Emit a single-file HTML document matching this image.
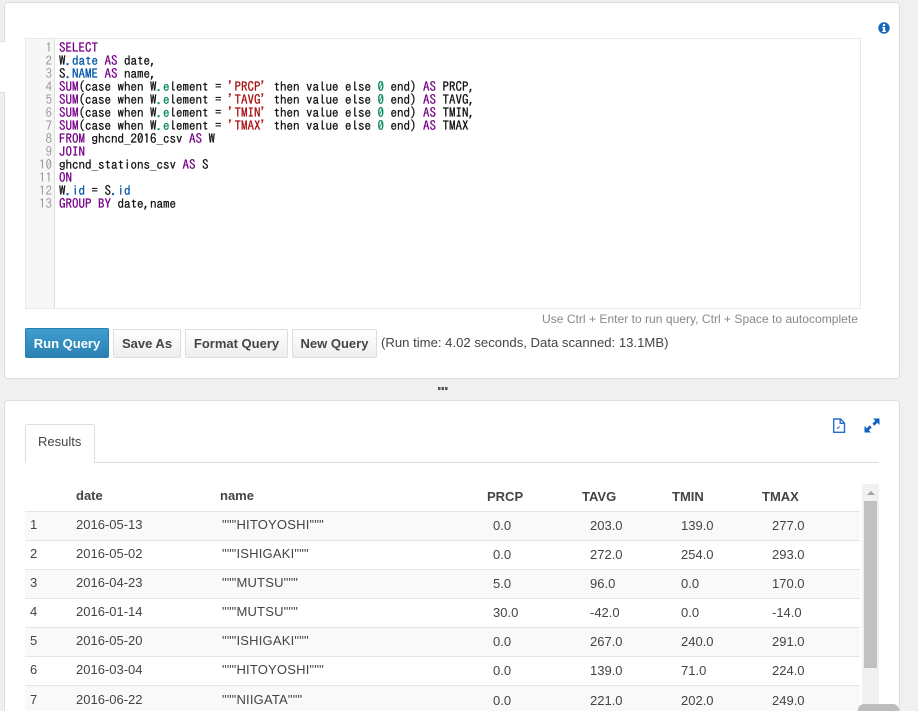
<!DOCTYPE html>
<html>
<head>
<meta charset="utf-8">
<style>
html,body{margin:0;padding:0;width:918px;height:711px;overflow:hidden;background:#f0f0f0;font-family:"Liberation Sans",sans-serif;color:#333;}
#wrap{position:relative;width:918px;height:711px;overflow:hidden;}
.abs,.t{position:absolute;}
.t{white-space:pre;font-size:13px;line-height:16px;color:#444;}
.n{letter-spacing:.2px;}
.panel{position:absolute;background:#fff;border:1px solid #ddd;border-radius:4px;box-sizing:border-box;}
#code{position:absolute;left:59px;top:41px;font-family:"IPAGothic",monospace;font-size:13px;line-height:13px;color:#111;white-space:pre;-webkit-text-stroke:.25px;}
#nums{position:absolute;left:26px;top:41px;width:26px;text-align:right;font-family:"IPAGothic",monospace;font-size:13px;line-height:13px;color:#999;white-space:pre;}
.k{color:#708}.v{color:#05a}.e{color:#085}.s{color:#a11}
.btn{position:absolute;top:329px;height:29px;box-sizing:border-box;border:1px solid #ddd;border-radius:2px;background:linear-gradient(#fff,#eee);font-size:13px;font-weight:bold;line-height:27px;text-align:center;color:#444;}
.row{position:absolute;left:25px;width:835px;height:29px;box-sizing:border-box;border-top:1px solid #e4e4e4;}
.odd{background:#f9f9f9;}
.h{font-weight:bold;color:#444;}
</style>
</head>
<body>
<div id="wrap">
<div class="abs" style="left:0;top:41px;width:6px;height:52px;background:#fff;border-top:1px solid #ddd;border-bottom:1px solid #ddd;box-sizing:border-box;"></div>
<div class="panel" style="left:4px;top:2px;width:896px;height:377px;"></div>
<div class="abs" style="left:4px;top:42px;width:2px;height:50px;background:#fff;"></div>
<div class="abs" style="left:25px;top:38px;width:836px;height:271px;box-sizing:border-box;border:1px solid #eaeaea;background:#fff;"></div>
<div class="abs" style="left:26px;top:39px;width:29px;height:269px;background:#f7f7f7;border-right:1px solid #ddd;box-sizing:border-box;"></div>
<div id="nums">1
2
3
4
5
6
7
8
9
10
11
12
13</div>
<div id="code"><span class="k">SELECT</span>
W<span class="v">.date</span> <span class="k">AS</span> date,
S<span class="v">.NAME</span> <span class="k">AS</span> name,
<span class="k">SUM</span>(case when W<span class="e">.e</span>lement = <span class="s">'PRCP'</span> then value else <span class="e">0</span> end) <span class="k">AS</span> PRCP,
<span class="k">SUM</span>(case when W<span class="e">.e</span>lement = <span class="s">'TAVG'</span> then value else <span class="e">0</span> end) <span class="k">AS</span> TAVG,
<span class="k">SUM</span>(case when W<span class="e">.e</span>lement = <span class="s">'TMIN'</span> then value else <span class="e">0</span> end) <span class="k">AS</span> TMIN,
<span class="k">SUM</span>(case when W<span class="e">.e</span>lement = <span class="s">'TMAX'</span> then value else <span class="e">0</span> end) <span class="k">AS</span> TMAX
<span class="k">FROM</span> ghcnd_2016_csv <span class="k">AS</span> W
<span class="k">JOIN</span>
ghcnd_stations_csv <span class="k">AS</span> S
<span class="k">ON</span>
W<span class="v">.id</span> = S<span class="v">.id</span>
<span class="k">GROUP BY</span> date,name</div>

<svg class="abs" style="left:878px;top:22px" width="12" height="12" viewBox="0 0 12 12"><circle cx="6" cy="6" r="5.7" fill="#1668b8"/><rect x="4.9" y="2" width="2.2" height="2" fill="#fff"/><path d="M4.200 5h2.900v3.800h.8V10H4.200V8.800h.8V6.200h-.8z" fill="#fff"/></svg>

<div class="t" style="left:542px;top:311px;font-size:12.08px;color:#888;">Use Ctrl + Enter to run query, Ctrl + Space to autocomplete</div>
<div class="btn" style="left:25px;top:328px;width:84px;height:30px;line-height:29px;background:linear-gradient(#3f9fcf,#2b80b4);border-color:#2b7fb0;color:#fff;">Run Query</div>
<div class="btn" style="left:113px;width:68px;">Save As</div>
<div class="btn" style="left:185px;width:103px;">Format Query</div>
<div class="btn" style="left:292px;width:85px;">New Query</div>
<div class="t" style="left:381px;top:335px;font-size:13.13px;">(Run time: 4.02 seconds, Data scanned: 13.1MB)</div>
<div class="abs" style="left:438px;top:387px;width:10px;height:3px;background:repeating-linear-gradient(90deg,#555 0 2.500px,transparent 2.500px 3.500px);"></div>

<div class="panel" style="left:4px;top:400px;width:896px;height:340px;"></div>
<svg class="abs" style="left:832px;top:418px" width="14" height="16" viewBox="0 0 14 16" fill="none" stroke="#2a6fcf" stroke-width="1.400"><path d="M1.700 1h6.800l4 4.200v9.100H1.700z"/><path d="M8.200 1.500v3.800h4"/><path d="M5.200 10.800l2.400-2.400" stroke="#4a6fa8" stroke-width="1.200"/></svg>
<svg class="abs" style="left:864px;top:417px" width="16" height="17" viewBox="0 0 16 17" fill="#0f62c4"><path d="M9 1.500h6.500V8l-2.200-2.200-2.900 2.900-2-2L11.300 3.700zM.5 9v6.500H7l-2.200-2.200 2.900-2.900-2-2-2.900 2.900z"/></svg>

<div class="abs" style="left:25px;top:462px;width:854px;height:1px;background:#ddd;"></div>
<div class="abs" style="left:25px;top:424px;width:70px;height:39px;box-sizing:border-box;background:#fff;border:1px solid #ddd;border-bottom:none;border-radius:3px 3px 0 0;"></div>
<div class="t" style="left:38px;top:434px;">Results</div>

<div class="t h" style="left:76px;top:488px;">date</div>
<div class="t h" style="left:220px;top:488px;">name</div>
<div class="t h" style="left:487px;top:489px;">PRCP</div>
<div class="t h" style="left:582px;top:489px;">TAVG</div>
<div class="t h" style="left:672px;top:489px;">TMIN</div>
<div class="t h" style="left:762px;top:489px;">TMAX</div>

<div class="row odd" style="top:511px;"></div>
<div class="row" style="top:540px;"></div>
<div class="row odd" style="top:569px;"></div>
<div class="row" style="top:598px;"></div>
<div class="row odd" style="top:627px;"></div>
<div class="row" style="top:656px;"></div>
<div class="row odd" style="top:685px;height:30px;"></div>

<div class="t" style="left:30px;top:517px;">1</div><div class="t" style="left:76px;top:517px;">2016-05-13</div><div class="t n" style="left:222px;top:517px;">"""HITOYOSHI"""</div><div class="t" style="left:493px;top:518px;">0.0</div><div class="t" style="left:590px;top:518px;">203.0</div><div class="t" style="left:681px;top:518px;">139.0</div><div class="t" style="left:772px;top:518px;">277.0</div>
<div class="t" style="left:30px;top:546px;">2</div><div class="t" style="left:76px;top:546px;">2016-05-02</div><div class="t n" style="left:222px;top:546px;">"""ISHIGAKI"""</div><div class="t" style="left:493px;top:547px;">0.0</div><div class="t" style="left:590px;top:547px;">272.0</div><div class="t" style="left:681px;top:547px;">254.0</div><div class="t" style="left:772px;top:547px;">293.0</div>
<div class="t" style="left:30px;top:575px;">3</div><div class="t" style="left:76px;top:575px;">2016-04-23</div><div class="t n" style="left:222px;top:575px;">"""MUTSU"""</div><div class="t" style="left:493px;top:576px;">5.0</div><div class="t" style="left:590px;top:576px;">96.0</div><div class="t" style="left:681px;top:576px;">0.0</div><div class="t" style="left:772px;top:576px;">170.0</div>
<div class="t" style="left:30px;top:604px;">4</div><div class="t" style="left:76px;top:604px;">2016-01-14</div><div class="t n" style="left:222px;top:604px;">"""MUTSU"""</div><div class="t" style="left:493px;top:605px;">30.0</div><div class="t" style="left:590px;top:605px;">-42.0</div><div class="t" style="left:681px;top:605px;">0.0</div><div class="t" style="left:772px;top:605px;">-14.0</div>
<div class="t" style="left:30px;top:633px;">5</div><div class="t" style="left:76px;top:633px;">2016-05-20</div><div class="t n" style="left:222px;top:633px;">"""ISHIGAKI"""</div><div class="t" style="left:493px;top:634px;">0.0</div><div class="t" style="left:590px;top:634px;">267.0</div><div class="t" style="left:681px;top:634px;">240.0</div><div class="t" style="left:772px;top:634px;">291.0</div>
<div class="t" style="left:30px;top:662px;">6</div><div class="t" style="left:76px;top:662px;">2016-03-04</div><div class="t n" style="left:222px;top:662px;">"""HITOYOSHI"""</div><div class="t" style="left:493px;top:663px;">0.0</div><div class="t" style="left:590px;top:663px;">139.0</div><div class="t" style="left:681px;top:663px;">71.0</div><div class="t" style="left:772px;top:663px;">224.0</div>
<div class="t" style="left:30px;top:692px;">7</div><div class="t" style="left:76px;top:692px;">2016-06-22</div><div class="t n" style="left:222px;top:692px;">"""NIIGATA"""</div><div class="t" style="left:493px;top:693px;">0.0</div><div class="t" style="left:590px;top:693px;">221.0</div><div class="t" style="left:681px;top:693px;">202.0</div><div class="t" style="left:772px;top:693px;">249.0</div>

<div class="abs" style="left:862px;top:484px;width:17px;height:227px;background:#f1f1f1;"></div>
<div class="abs" style="left:867px;top:491px;width:0;height:0;border-left:4px solid transparent;border-right:4px solid transparent;border-bottom:4px solid #a3a3a3;"></div>
<div class="abs" style="left:864px;top:501px;width:13px;height:167px;background:#c1c1c1;"></div>
<div class="abs" style="left:858px;top:704px;width:41px;height:12px;background:#bdbdbd;border-radius:6px 6px 0 0;"></div>
</div>
</body>
</html>
